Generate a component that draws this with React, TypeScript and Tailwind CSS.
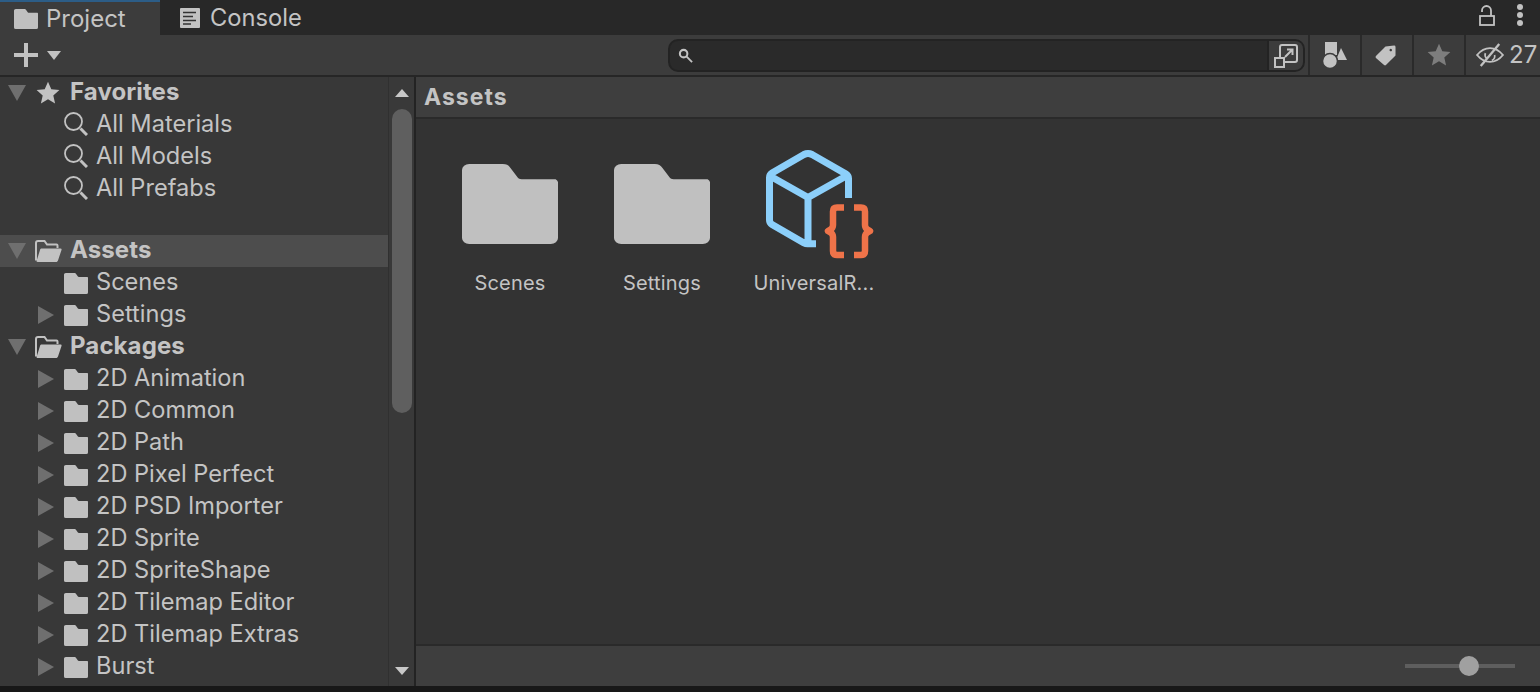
import React from "react";

const FOLDER = "M2 3.500A1.500 1.500 0 0 1 3.500 2H10.500c.8 0 1.200.3 1.600 1l1.500 2.400c.2.3.4.4.8.4h7.100A1.500 1.500 0 0 1 22 7.300v13.200a1.500 1.500 0 0 1-1.500 1.500h-17A1.500 1.500 0 0 1 2 20.500Z";

function Folder({ className }: { className: string }) {
  return (
    <svg viewBox="2 2 20 20" preserveAspectRatio="none" className={className} fill="#c0c0c0">
      <path d={FOLDER} />
    </svg>
  );
}

function OpenFolder() {
  return (
    <svg viewBox="0 0 27 24" className="h-[24px] w-[27px] shrink-0">
      <path d="M1 21.500V4a2 2 0 0 1 2-2h6.500l2.500 3.500h9.500a1 1 0 0 1 1 1V9" fill="none" stroke="#c2c2c2" strokeWidth="2" />
      <path d="M6.500 9.500H25.500c1 0 1.300.6 1 1.400L23 21.500c-.3.900-.9 1.500-2 1.500H2.500C1.500 23 1.500 22 1.800 21.200L5 11c.3-1 .7-1.500 1.500-1.500Z" fill="#c2c2c2" />
    </svg>
  );
}

function Search() {
  return (
    <svg viewBox="0 0 24 24" className="h-[24px] w-[24px] shrink-0" fill="none" stroke="#c2c2c2">
      <circle cx="9.500" cy="9.500" r="8.500" strokeWidth="1.800" />
      <path d="M16.500 16.500 23 23" strokeWidth="3" />
    </svg>
  );
}

function Star({ color = "#c2c2c2", size = "h-[24px] w-[24px]" }: { color?: string; size?: string }) {
  return (
    <svg viewBox="0 0 24 24" className={`${size} shrink-0`} fill={color}>
      <path d="M12 .8 15.300 8.300 23.400 9.100 17.300 14.500 19.100 22.500 12 18.300 4.900 22.500 6.700 14.500.6 9.100 8.700 8.300Z" />
    </svg>
  );
}

function Down() {
  return (
    <svg viewBox="0 0 18 16" className="h-[16px] w-[18px] shrink-0" fill="#6f6f6f">
      <path d="M0 0H18L9 16Z" />
    </svg>
  );
}

function Right({ on = true }: { on?: boolean }) {
  return (
    <svg viewBox="0 0 16 18" className={`h-[18px] w-[16px] shrink-0 ${on ? "" : "invisible"}`} fill="#6f6f6f">
      <path d="M0 0V18L16 9Z" />
    </svg>
  );
}

function Top({ icon, label, first = false }: { icon: React.ReactNode; label: string; first?: boolean }) {
  return (
    <div className={`flex items-center pl-[8px] ${first ? "h-[31px]" : "h-[32px]"}`}>
      <Down />
      <div className="ml-[9px] mr-[1px] flex w-[26px] justify-center">{icon}</div>
      <span className="ml-[8px] pb-[2px] text-[24px] font-bold leading-none tracking-[0.1px] text-[#c4c4c4]">{label}</span>
    </div>
  );
}

function Child({ label, arrow = true, search = false }: { label: string; arrow?: boolean; search?: boolean }) {
  return (
    <div className="flex h-[32px] items-center pl-[38px]">
      <Right on={arrow} />
      <div className="ml-[10px] flex w-[24px] justify-center">
        {search ? <Search /> : <Folder className="h-[21px] w-[24px] shrink-0" />}
      </div>
      <span className={`ml-[8px] text-[23.6px] leading-none text-[#c4c4c4] ${search ? "" : "pb-[2px]"}`}>{label}</span>
    </div>
  );
}

function ToolBtn({ children, wide = false }: { children: React.ReactNode; wide?: boolean }) {
  return (
    <div className={`flex h-[40px] items-center justify-center border-l-2 border-[#2a2a2a] ${wide ? "w-[76px] justify-start pl-[10px]" : "w-[52px]"}`}>
      {children}
    </div>
  );
}

function Tile({ label, icon }: { label: string; icon: React.ReactNode }) {
  return (
    <div className="flex w-[152px] flex-col items-center">
      <div className="flex h-[128px] w-full items-center justify-center">{icon}</div>
      <span className="mt-[3px] text-[20px] leading-[24px] tracking-[0.2px] text-[#c4c4c4]">{label}</span>
    </div>
  );
}

const packages = [
  "2D Animation",
  "2D Common",
  "2D Path",
  "2D Pixel Perfect",
  "2D PSD Importer",
  "2D Sprite",
  "2D SpriteShape",
  "2D Tilemap Editor",
  "2D Tilemap Extras",
  "Burst",
];

export default function App() {
  return (
    <div className="flex h-[692px] w-[1540px] flex-col overflow-hidden bg-[#181818] font-['Inter',sans-serif] text-[#c4c4c4]">
      {/* Tabs */}
      <div className="flex h-[35px] shrink-0 items-stretch bg-[#282828]">
        <div className="flex w-[160px] items-center border-t-2 border-[#2c5d87] bg-[#3c3c3c] pl-[14px]">
          <Folder className="h-[20px] w-[24px] shrink-0" />
          <span className="ml-[8px] text-[24px] leading-none">Project</span>
        </div>
        <div className="flex w-[160px] items-center pl-[20px]">
          <svg viewBox="0 0 20 20" className="h-[20px] w-[20px] shrink-0">
            <rect width="20" height="20" rx="1" fill="#c2c2c2" />
            <path d="M3 4.500h13M3 8.500h10M3 12.500h13M3 16h8" stroke="#333" strokeWidth="1.500" />
          </svg>
          <span className="ml-[10px] text-[23.7px] leading-none">Console</span>
        </div>
        <div className="flex-1" />
        <div className="flex items-center gap-[22px] pb-[5px] pr-[17px]">
          <svg viewBox="0 0 16 21" className="h-[21px] w-[16px]" fill="none" stroke="#c2c2c2" strokeWidth="1.800">
            <rect x="1" y="11" width="14" height="9" />
            <path d="M3 7V5.500a4.500 4.500 0 0 1 9 0V11" />
          </svg>
          <div className="flex flex-col gap-[2px]">
            <div className="h-[6px] w-[6px] rounded-full bg-[#c2c2c2]" />
            <div className="h-[6px] w-[6px] rounded-full bg-[#c2c2c2]" />
            <div className="h-[6px] w-[6px] rounded-full bg-[#c2c2c2]" />
          </div>
        </div>
      </div>

      {/* Toolbar */}
      <div className="flex h-[42px] shrink-0 items-start border-b-2 border-[#262626] bg-[#3c3c3c]">
        <div className="flex h-[40px] items-center pl-[14px]">
          <svg viewBox="0 0 24 24" className="h-[24px] w-[24px]" fill="#c2c2c2">
            <path d="M10 0h4v10h10v4H14v10h-4V14H0v-4h10Z" />
          </svg>
          <svg viewBox="0 0 14 9" className="ml-[9px] h-[9px] w-[14px]" fill="#c2c2c2">
            <path d="M0 0h14L7 9Z" />
          </svg>
        </div>
        <div className="flex-1" />
        <div className="mt-[4px] flex h-[33px] w-[637px] items-center rounded-[10px] border-2 border-[#232323] bg-[#2a2a2a] pl-[8px]">
          <svg viewBox="0 0 16 16" className="h-[15px] w-[15px]" fill="none" stroke="#c2c2c2">
            <circle cx="6" cy="6" r="4" strokeWidth="2.200" />
            <path d="M9 9 15 15" strokeWidth="2" />
          </svg>
          <div className="flex-1" />
          <div className="flex h-full w-[36px] items-center justify-center rounded-r-[8px] border-l-2 border-[#232323] bg-[#3c3c3c]">
            <svg viewBox="0 0 24 24" className="h-[24px] w-[24px]" fill="none" stroke="#c2c2c2" strokeWidth="2">
              <path d="M6 14V3a2 2 0 0 1 2-2h13a2 2 0 0 1 2 2v13a2 2 0 0 1-2 2H10" />
              <rect x="1" y="14" width="9" height="9" />
              <path d="M11 13 18 6M13 5.500h5.500V11" />
            </svg>
          </div>
        </div>
        <div className="ml-[3px] flex">
          <ToolBtn>
            <svg viewBox="0 0 24 26" className="h-[26px] w-[24px]" fill="#c2c2c2">
              <rect x="2" y="0" width="12" height="13" />
              <path d="M18 6 24 18H13Z" />
              <circle cx="7" cy="19" r="7.500" stroke="#3c3c3c" strokeWidth="1.500" />
            </svg>
          </ToolBtn>
          <ToolBtn>
            <svg viewBox="0 0 22 22" className="mr-[4px] h-[21px] w-[21px]" fill="#c2c2c2">
              <path fillRule="evenodd" d="M11 1.500 20 0.500a1.500 1.500 0 0 1 1.500 1.500v9L11.500 21a1.500 1.500 0 0 1-2 0L1 13.500a1.500 1.500 0 0 1 0-2ZM16.500 4a1.300 1.300 0 1 0 .01 0Z" />
            </svg>
          </ToolBtn>
          <ToolBtn>
            <Star color="#7d7d7d" />
          </ToolBtn>
          <ToolBtn wide>
            <svg viewBox="0 0 30 26" className="h-[24px] w-[28px] shrink-0" fill="none" stroke="#c2c2c2" strokeWidth="2">
              <path d="M1 13C5 8 10 5.500 15 5.500S25 8 29 13c-4 5-9 7.500-14 7.500S5 18 1 13Z" />
              <path d="M10 11a5.500 5.500 0 0 0 1.500 6M17 19a5.500 5.500 0 0 0 3-6" strokeWidth="1.800" />
              <path d="M25 1 5 25" strokeWidth="2.500" />
            </svg>
            <span className="ml-[5px] text-[24px] leading-none">27</span>
          </ToolBtn>
        </div>
      </div>

      {/* Body */}
      <div className="flex h-[609px] shrink-0">
        <div className="flex w-[388px] shrink-0 flex-col overflow-hidden bg-[#383838]">
          <Top first icon={<Star />} label="Favorites" />
          <Child label="All Materials" arrow={false} search />
          <Child label="All Models" arrow={false} search />
          <Child label="All Prefabs" arrow={false} search />
          <div className="h-[31px] shrink-0" />
          <div className="bg-[#4d4d4d]">
            <Top icon={<OpenFolder />} label="Assets" />
          </div>
          <Child label="Scenes" arrow={false} />
          <Child label="Settings" />
          <Top icon={<OpenFolder />} label="Packages" />
          {packages.map((p) => (
            <Child key={p} label={p} />
          ))}
        </div>

        {/* Scrollbar */}
        <div className="flex w-[26px] shrink-0 flex-col items-center border-l border-[#303030] bg-[#393939]">
          <svg viewBox="0 0 14 8" className="mt-[12px] h-[8px] w-[14px] shrink-0" fill="#c8c8c8">
            <path d="M7 0 14 8H0Z" />
          </svg>
          <div className="mt-[12px] h-[304px] w-[20px] shrink-0 rounded-full bg-[#5f5f5f]" />
          <div className="flex-1" />
          <svg viewBox="0 0 14 8" className="mb-[11px] h-[8px] w-[14px] shrink-0" fill="#c8c8c8">
            <path d="M0 0H14L7 8Z" />
          </svg>
        </div>

        {/* Main */}
        <div className="flex min-w-0 flex-1 flex-col border-l-2 border-[#232323] bg-[#333333]">
          <div className="flex h-[42px] shrink-0 items-center border-b-2 border-[#2a2a2a] bg-[#3e3e3e] pl-[8px]">
            <span className="text-[23px] font-bold leading-none tracking-[1px] text-[#c4c4c4]">Assets</span>
          </div>
          <div className="flex flex-1 items-start pl-[18px] pt-[21px]">
            <Tile label="Scenes" icon={<Folder className="h-[80px] w-[96px]" />} />
            <Tile label="Settings" icon={<Folder className="h-[80px] w-[96px]" />} />
            <Tile
              label="UniversalR..."
              icon={
                <svg viewBox="760 144 124 120" className="ml-[14px] h-[120px] w-[124px] shrink-0" fill="none">
                  <path
                    d="M849.500 198V178.500q0-3-2.500-4.500L813 154.500q-4-2-8 0L773 173q-2.500 1.500-2.500 4.500V220q0 3 2.500 4.500L805 243q1.500.8 3.500.8H817M771 176 809 197.500 849 175M809 197.500V243"
                    stroke="#8ccffa"
                    strokeWidth="7"
                    strokeLinejoin="round"
                  />
                  <path
                    d="M845 207.500H838q-4 0-4 4V225q0 3-2.500 4.500L829 231 831.500 232.500q2.500 1.500 2.500 4.500V251q0 4 4 4H845M855 207.500H862q4 0 4 4V225q0 3 2.500 4.500L871 231 868.500 232.500q-2.500 1.500-2.500 4.500V251q0 4-4 4H855"
                    stroke="#ef7349"
                    strokeWidth="6.500"
                    strokeLinejoin="round"
                  />
                </svg>
              }
            />
          </div>
          <div className="flex h-[42px] shrink-0 items-center justify-end border-t-2 border-[#2a2a2a] bg-[#3e3e3e] pr-[25px]">
            <div className="relative h-[4px] w-[110px] bg-[#5e5e5e]">
              <div className="absolute left-[54px] top-[-8px] h-[20px] w-[20px] rounded-full bg-[#a0a0a0]" />
            </div>
          </div>
        </div>
      </div>
    </div>
  );
}
